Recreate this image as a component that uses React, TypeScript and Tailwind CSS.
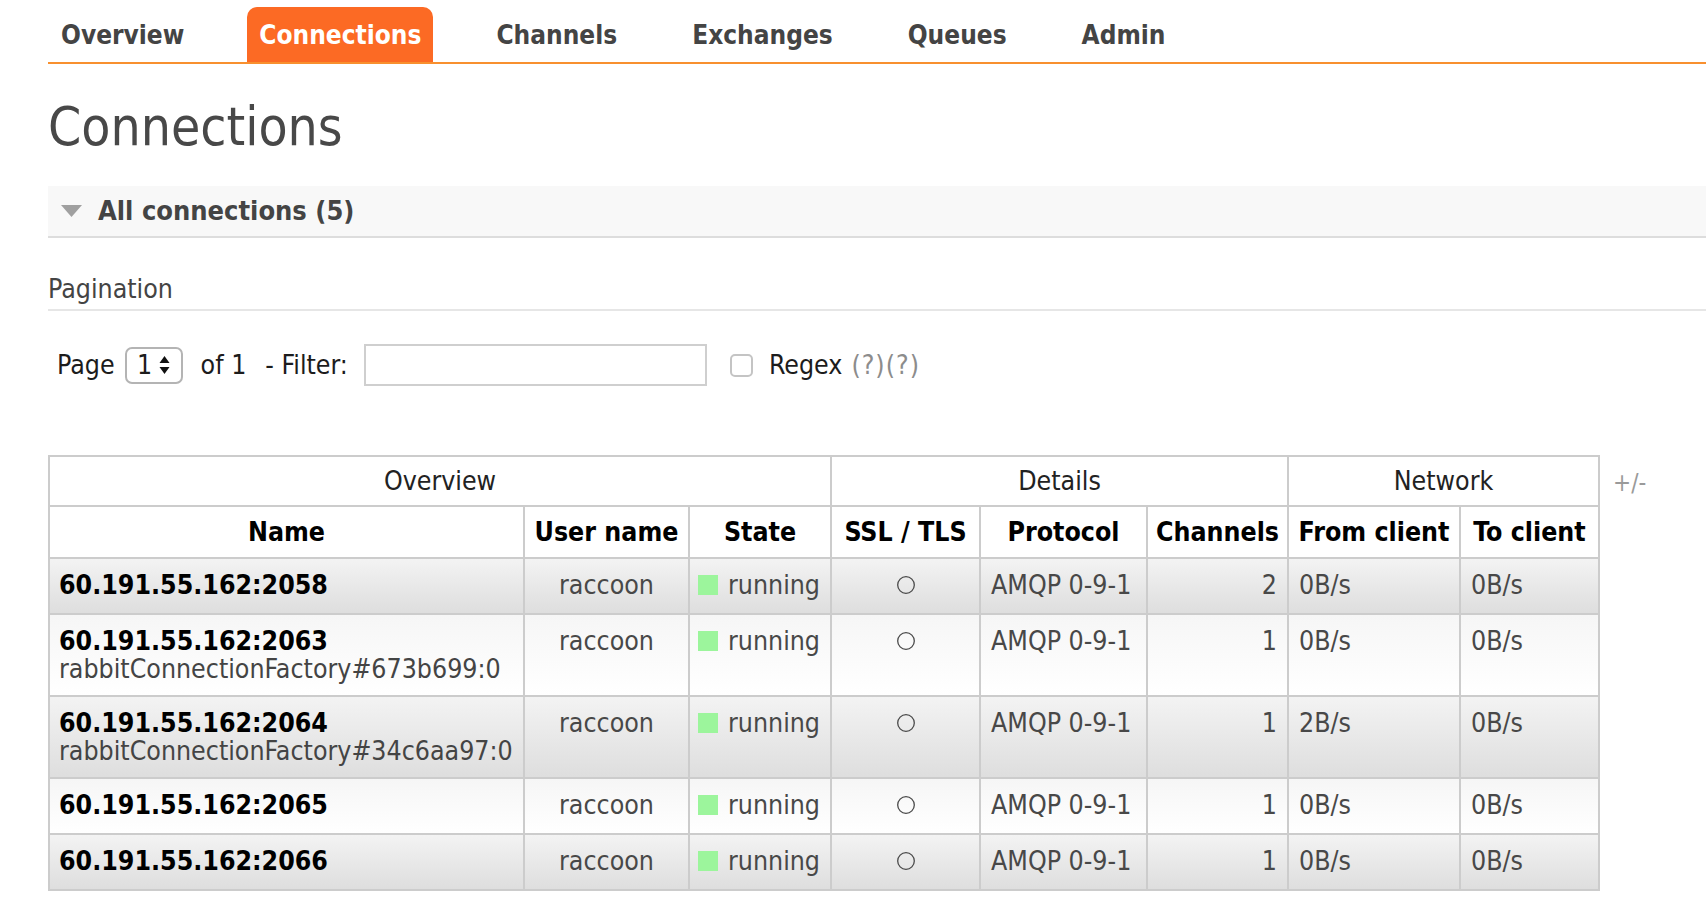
import { Fragment } from 'react';

const tabs = ['Overview', 'Connections', 'Channels', 'Exchanges', 'Queues', 'Admin'];

const columns = [
  { label: 'Name', width: 'w-[475px]' },
  { label: 'User name', width: 'w-[165px]' },
  { label: 'State', width: 'w-[142px]' },
  { label: 'SSL / TLS', width: 'w-[149px]' },
  { label: 'Protocol', width: 'w-[167px]' },
  { label: 'Channels', width: 'w-[141px]' },
  { label: 'From client', width: 'w-[172px]' },
  { label: 'To client', width: 'w-[139px]' },
];

const connections = [
  { name: '60.191.55.162:2058', client: '', channels: 2, from: '0B/s', to: '0B/s' },
  { name: '60.191.55.162:2063', client: 'rabbitConnectionFactory#673b699:0', channels: 1, from: '0B/s', to: '0B/s' },
  { name: '60.191.55.162:2064', client: 'rabbitConnectionFactory#34c6aa97:0', channels: 1, from: '2B/s', to: '0B/s' },
  { name: '60.191.55.162:2065', client: '', channels: 1, from: '0B/s', to: '0B/s' },
  { name: '60.191.55.162:2066', client: '', channels: 1, from: '0B/s', to: '0B/s' },
];

function SelectArrows() {
  return (
    <svg width="11" height="20" viewBox="0 0 11 20" className="ml-[7px]">
      <polygon points="5.5,1 10.5,8 0.5,8" fill="#111" />
      <polygon points="0.5,12 10.5,12 5.5,19" fill="#111" />
    </svg>
  );
}

export default function App() {
  return (
    <div className="min-h-screen bg-white pl-[48px] font-['DejaVu_Sans_Condensed','DejaVu_Sans',sans-serif] text-[#444]">
      {/* top menu */}
      <nav className="pt-[7px]">
        <ul className="flex gap-[51px] border-b-2 border-[#f8902f] pl-[1px]">
          {tabs.map((t) => (
            <li
              key={t}
              className={
                t === 'Connections'
                  ? 'h-[55px] pt-[2px] px-3 flex items-center rounded-t-[10px] bg-[#fc6a24] text-white text-[26px] font-bold'
                  : 'h-[55px] pt-[2px] px-3 flex items-center text-[#444] text-[26px] font-bold'
              }
            >
              {t}
            </li>
          ))}
        </ul>
      </nav>

      <h1 className="mt-[37px] text-[53px] leading-[52px] text-[#484848]">Connections</h1>

      <div className="mt-[33px] h-[52px] bg-[#f8f8f8] border-b-2 border-[#ddd] flex items-center pl-[13px]">
        <svg width="21" height="12" viewBox="0 0 21 12">
          <polygon points="0,0 21,0 10.5,12" fill="#a0a0a0" />
        </svg>
        <h2 className="ml-[16px] text-[27px] font-bold text-[#444]">All connections (5)</h2>
      </div>

      <div className="mt-[36px] pb-[5px] border-b-2 border-[#e6e6e6] text-[26.5px] leading-[30px] text-[#444]">
        Pagination
      </div>

      <div className="mt-[33px] h-[42px] flex items-center text-[26.5px] text-[#1c1c1c]">
        <span className="ml-[9px]">Page</span>
        <div className="ml-[10px] w-[58px] h-[37px] border-2 border-[#b4b4b4] rounded-[7px] flex items-center justify-center bg-white">
          <span>1</span>
          <SelectArrows />
        </div>
        <span className="ml-[18px]">of 1</span>
        <span className="ml-[19px]">- Filter:</span>
        <input className="ml-[16px] w-[343px] h-[42px] border-2 border-[#cfcfcf] bg-white outline-none" />
        <span className="ml-[23px] w-[23px] h-[23px] rounded-[5px] border-2 border-[#c4c4c4] bg-white" />
        <span className="ml-[16px]">Regex</span>
        <span className="ml-[9px] tracking-[1px] text-[#8c8c8c]">(?)(?)</span>
      </div>

      <div className="mt-[69px] flex items-start">
        <table className="table-fixed border-collapse border-2 border-[#cccccc] w-[1550px] text-[26.5px] leading-[30px]">
          <colgroup>
            {columns.map((c) => (
              <col key={c.label} className={c.width} />
            ))}
          </colgroup>
          <thead>
            <tr>
              <th colSpan={3} className="border-2 border-[#cccccc] py-[9px] font-normal text-[#222]">Overview</th>
              <th colSpan={3} className="border-2 border-[#cccccc] py-[9px] font-normal text-[#222]">Details</th>
              <th colSpan={2} className="border-2 border-[#cccccc] py-[9px] font-normal text-[#222]">Network</th>
            </tr>
            <tr>
              {columns.map((c) => (
                <th key={c.label} className="border-2 border-[#cccccc] py-[10px] font-bold text-black whitespace-nowrap">
                  {c.label}
                </th>
              ))}
            </tr>
          </thead>
          <tbody>
            {connections.map((c, i) => {
              const bg =
                i % 2 === 0
                  ? 'bg-gradient-to-b from-[#f3f3f3] to-[#dedede]'
                  : 'bg-gradient-to-b from-[#f6f6f6] to-white';
              const td = `border-2 border-[#cccccc] align-top pt-[11px] pb-[13px] ${bg}`;
              return (
                <Fragment key={c.name}>
                  <tr>
                    <td className={`${td} px-[9px]`}>
                      <div className="font-bold text-black">{c.name}</div>
                      {c.client && <div className="leading-[26px] text-[#444]">{c.client}</div>}
                    </td>
                    <td className={`${td} text-center text-[#484848]`}>raccoon</td>
                    <td className={`${td} px-[8px] text-[#484848]`}>
                      <div className="flex items-center">
                        <span className="w-[20px] h-[20px] bg-[#9cf59c]" />
                        <span className="ml-[10px]">running</span>
                      </div>
                    </td>
                    <td className={`${td} text-center`}>
                      <div className="h-[30px] flex items-center justify-center">
                        <svg width="20" height="20" viewBox="0 0 20 20">
                          <circle cx="10" cy="10" r="8.3" fill="none" stroke="#4a4a4a" strokeWidth="1.3" />
                        </svg>
                      </div>
                    </td>
                    <td className={`${td} px-[10px] text-[#484848] whitespace-nowrap`}>AMQP 0-9-1</td>
                    <td className={`${td} px-[10px] text-right text-[#484848]`}>{c.channels}</td>
                    <td className={`${td} px-[10px] text-[#484848]`}>{c.from}</td>
                    <td className={`${td} px-[10px] text-[#484848]`}>{c.to}</td>
                  </tr>
                </Fragment>
              );
            })}
          </tbody>
        </table>
        <span className="ml-[13px] mt-[10px] text-[24px] text-[#9a9a9a]">+/-</span>
      </div>
    </div>
  );
}
